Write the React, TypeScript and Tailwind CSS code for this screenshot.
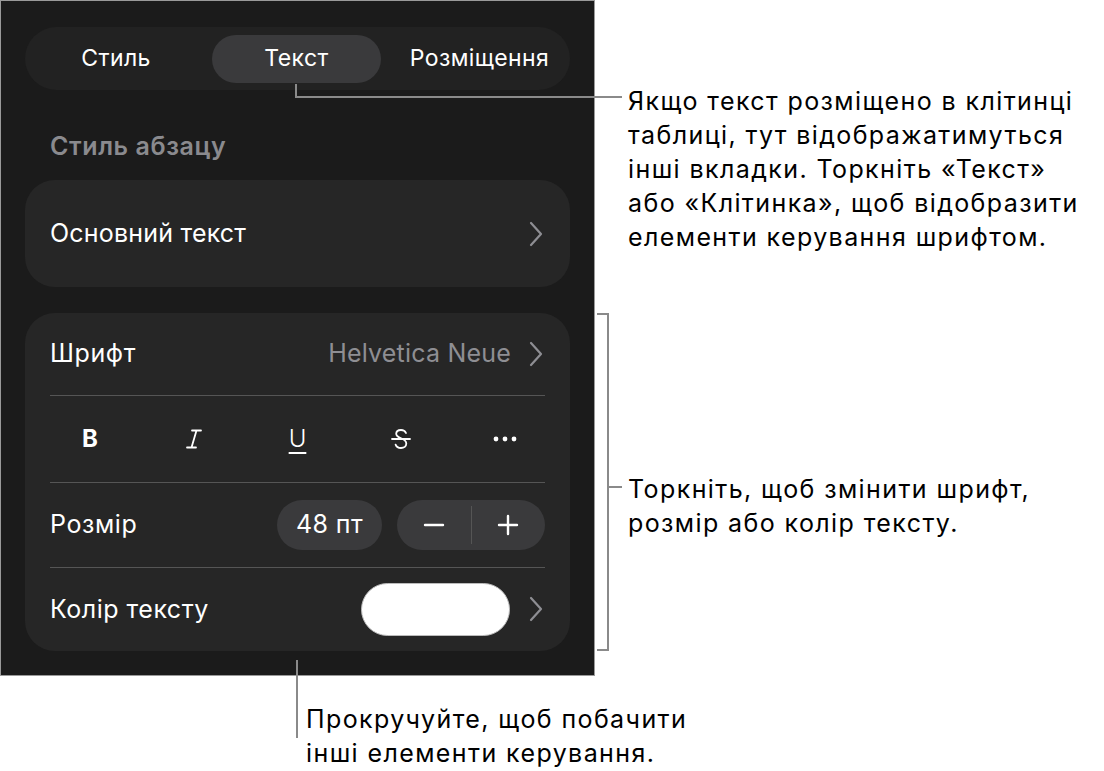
import React from "react";

const Chevron: React.FC = () => (
  <svg width="14" height="26" viewBox="0 0 14 26" fill="none" className="shrink-0">
    <path d="M2 2 L12 13 L2 24" stroke="#8e8e93" strokeWidth="2.2" strokeLinecap="round" strokeLinejoin="round" />
  </svg>
);

const tabs = ["Стиль", "Текст", "Розміщення"];

const App: React.FC = () => {
  return (
    <div
      className="relative w-[1104px] h-[771px] bg-white overflow-hidden"
      style={{ fontFamily: "Inter, 'Noto Sans', sans-serif" }}
    >
      {/* panel */}
      <div className="w-[595px] h-[676px] bg-[#1b1b1b] border border-[#9a9a9a] px-[24px] pt-[26px] text-white">
        <div className="grid h-[63px] grid-cols-[168px_169px_173px] items-center gap-x-[12px] rounded-full bg-[#222222] pl-[7px]">
          {tabs.map((t) => (
            <div
              key={t}
              className={
                t === "Текст"
                  ? "flex h-[48px] items-center justify-center rounded-full bg-[#3a3a3c] text-[23px] tracking-[0.4px]"
                  : "flex h-[48px] items-center justify-center text-[23px] tracking-[0.4px]"
              }
            >
              {t}
            </div>
          ))}
        </div>

        <div className="pt-[42px] pl-[25px] text-[25px] leading-[28px] font-semibold text-[#8a8a8e] tracking-[0.6px]">
          Стиль абзацу
        </div>

        <div className="mt-[20px] flex h-[107px] items-center justify-between rounded-[30px] bg-[#262626] pl-[25px] pr-[27px]">
          <span className="text-[25px] tracking-[0.2px]">Основний текст</span>
          <Chevron />
        </div>

        <div className="mt-[26px] flex h-[338px] flex-col rounded-[30px] bg-[#262626]">
          <div className="flex h-[83px] items-center justify-between pl-[25px] pr-[27px]">
            <span className="text-[25px] tracking-[0.6px]">Шрифт</span>
            <div className="flex items-center gap-[18px]">
              <span className="text-[25px] text-[#8e8e93] tracking-[0.2px]">Helvetica Neue</span>
              <Chevron />
            </div>
          </div>
          <div className="mx-[25px] h-px bg-[#555555]" />
          <div className="mx-[13px] grid h-[86px] grid-cols-5 items-center">
            <div className="flex justify-center text-[24px] font-bold">B</div>
            <div className="flex justify-center">
              <svg width="18" height="22" viewBox="0 0 18 22" fill="none">
                <path d="M7 2.5 H16 M2 19.5 H11 M11.5 2.5 L6.5 19.5" stroke="white" strokeWidth="1.8" strokeLinecap="round" />
              </svg>
            </div>
            <div className="flex justify-center">
              <span className="text-[24px] font-light underline decoration-[2px] underline-offset-[5px]">U</span>
            </div>
            <div className="flex justify-center">
              <svg width="26" height="24" viewBox="0 0 26 24" fill="none">
                <path
                  d="M18 6 C17 3.8 15.2 3 13 3 C10.2 3 8.2 4.5 8.2 6.8 C8.2 12 18.3 10.6 18.3 16.6 C18.3 19.2 16 21 13 21 C10.3 21 8.4 19.8 7.6 17.6"
                  stroke="white"
                  strokeWidth="1.8"
                  strokeLinecap="round"
                />
                <path d="M4 12 H22" stroke="white" strokeWidth="1.8" strokeLinecap="round" />
              </svg>
            </div>
            <div className="flex justify-center">
              <svg width="24" height="6" viewBox="0 0 24 6">
                <circle cx="3" cy="3" r="2.4" fill="white" />
                <circle cx="12" cy="3" r="2.4" fill="white" />
                <circle cx="21" cy="3" r="2.4" fill="white" />
              </svg>
            </div>
          </div>
          <div className="mx-[25px] h-px bg-[#555555]" />
          <div className="flex h-[85px] items-center justify-between pl-[25px] pr-[25px]">
            <span className="text-[25px] tracking-[0.6px]">Розмір</span>
            <div className="flex items-center gap-[15px]">
              <div className="flex h-[50px] w-[105px] items-center justify-center rounded-full bg-[#3a3a3c] text-[25px] tracking-[0.4px]">
                48 пт
              </div>
              <div className="flex h-[50px] w-[148px] items-center rounded-full bg-[#3a3a3c]">
                <div className="flex flex-1 justify-center">
                  <svg width="22" height="22" viewBox="0 0 22 22">
                    <path d="M2 11 H20" stroke="white" strokeWidth="2.4" strokeLinecap="round" />
                  </svg>
                </div>
                <div className="h-[38px] w-px bg-[#555555]" />
                <div className="flex flex-1 justify-center">
                  <svg width="22" height="22" viewBox="0 0 22 22">
                    <path d="M2 11 H20 M11 2 V20" stroke="white" strokeWidth="2.4" strokeLinecap="round" />
                  </svg>
                </div>
              </div>
            </div>
          </div>
          <div className="mx-[25px] h-px bg-[#555555]" />
          <div className="flex h-[84px] items-center justify-between pl-[25px] pr-[27px]">
            <span className="text-[25px] tracking-[0.5px]">Колір тексту</span>
            <div className="flex items-center gap-[19px]">
              <div className="h-[53px] w-[149px] rounded-full border border-[#bbbbbb] bg-white" />
              <Chevron />
            </div>
          </div>
        </div>
      </div>

      {/* callout: tabs */}
      <div className="absolute left-[295px] top-[84px] h-[14px] w-[327px] border-b-2 border-l-2 border-[#8a8a8a]" />
      <div className="absolute left-[628px] top-[84px] text-[25px] leading-[34px] text-black tracking-[1.4px]">
        Якщо текст розміщено в клітинці
        <br />
        таблиці, тут відображатимуться
        <br />
        інші вкладки. Торкніть «Текст»
        <br />
        або «Клітинка», щоб відобразити
        <br />
        елементи керування шрифтом.
      </div>

      {/* callout: font controls */}
      <div className="absolute left-[597px] top-[313px] h-[338px] w-[12px] border-y-2 border-r-2 border-[#8a8a8a]" />
      <div className="absolute left-[609px] top-[486px] h-[2px] w-[13px] bg-[#8a8a8a]" />
      <div className="absolute left-[628px] top-[472px] text-[25px] leading-[34px] text-black tracking-[1.4px]">
        Торкніть, щоб змінити шрифт,
        <br />
        розмір або колір тексту.
      </div>

      {/* callout: scroll */}
      <div className="absolute left-[296px] top-[660px] h-[78px] w-[2px] bg-[#8a8a8a]" />
      <div className="absolute left-[306px] top-[702px] text-[25px] leading-[34px] text-black tracking-[1.4px]">
        Прокручуйте, щоб побачити
        <br />
        інші елементи керування.
      </div>
    </div>
  );
};

export default App;
